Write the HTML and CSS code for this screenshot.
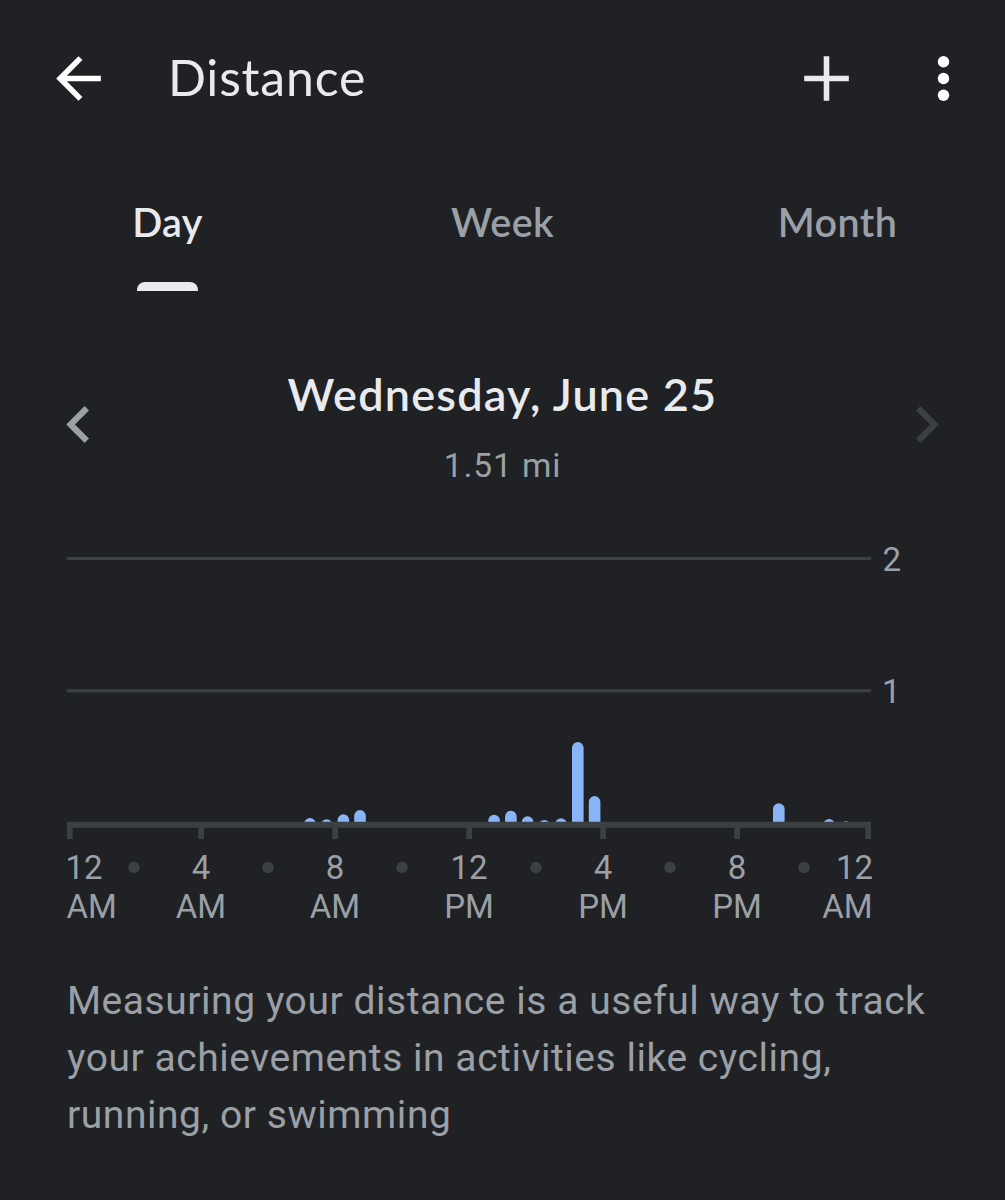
FILE: index.html
```html
<!DOCTYPE html>
<html lang="en">
<head>
  <meta charset="UTF-8">
  <meta name="viewport" content="width=device-width, initial-scale=1.0">
  <title>Distance</title>
  <link rel="stylesheet" href="styles.css">
</head>
<body>

  <header class="app-bar">
    <svg class="icon" viewBox="0 0 24 24" fill="#fff"><path d="M20 11H7.83l5.59-5.59L12 4l-8 8 8 8 1.41-1.41L7.83 13H20v-2z"/></svg>
    <h1>Distance</h1>
    <svg class="icon add" viewBox="0 0 24 24" fill="#e8eaed"><path d="M20 13h-7v7h-2v-7H4v-2h7V4h2v7h7v2z"/></svg>
    <svg class="icon" viewBox="0 0 24 24" fill="#fff"><circle cx="12" cy="6" r="2.05"/><circle cx="12" cy="12" r="2.05"/><circle cx="12" cy="18" r="2.05"/></svg>
  </header>

  <nav class="tabs">
    <a class="tab active"><span>Day</span></a>
    <a class="tab"><span>Week</span></a>
    <a class="tab"><span>Month</span></a>
  </nav>

  <main>
    <div class="date-nav">
      <svg class="icon" viewBox="0 0 24 24" fill="#9aa0a6"><path d="M15.41 7.41L14 6l-6 6 6 6 1.41-1.41L10.83 12z" transform="matrix(1.1 0 0 1.1 -1.2 -1.2)"/></svg>
      <div class="date">
        <h2>Wednesday, June 25</h2>
        <p>1.51 mi</p>
      </div>
      <svg class="icon" viewBox="0 0 24 24" fill="#3c4043"><path d="M10 6L8.59 7.41 13.17 12l-4.58 4.59L10 18l6-6z" transform="matrix(1.1 0 0 1.1 -1.2 -1.2)"/></svg>
    </div>

    <svg class="chart" viewBox="0 530 1005 400">
      <defs>
        <clipPath id="plot"><rect x="67" y="540" width="804" height="282"/></clipPath>
      </defs>
      <g class="grid">
        <rect x="67" y="557" width="804" height="3"/>
        <rect x="67" y="689.3" width="804" height="3"/>
      </g>
      <g class="bars" clip-path="url(#plot)">
        <rect x="304.2" y="818" width="11.6" height="20" rx="5.8"/>
        <rect x="320.8" y="819.3" width="11.6" height="20" rx="5.8"/>
        <rect x="337.6" y="814.3" width="11.6" height="20" rx="5.8"/>
        <rect x="354.2" y="810" width="11.6" height="20" rx="5.8"/>
        <rect x="488.3" y="814.7" width="11.6" height="20" rx="5.8"/>
        <rect x="505.1" y="810.8" width="11.6" height="20" rx="5.8"/>
        <rect x="521.8" y="816.3" width="11.6" height="20" rx="5.8"/>
        <rect x="538.5" y="819.9" width="11.6" height="20" rx="5.8"/>
        <rect x="555.2" y="818.2" width="11.6" height="20" rx="5.8"/>
        <rect x="572" y="742" width="11.6" height="100" rx="5.8"/>
        <rect x="588.8" y="796" width="11.6" height="50" rx="5.8"/>
        <rect x="773" y="803.2" width="11.6" height="40" rx="5.8"/>
        <rect x="823.3" y="819.1" width="11.6" height="20" rx="5.8"/>
        <rect x="840.1" y="821.2" width="11.6" height="20" rx="5.8"/>
      </g>
      <path class="axis" d="M67 821.7h804V839h-5.7v-11.3H740V839h-5.7v-11.3H606V839h-5.7v-11.3H472V839h-5.7v-11.3H338V839h-5.7v-11.3H204V839h-5.7v-11.3H72.7V839H67z"/>
      <g class="dots">
        <circle cx="134" cy="867.5" r="5.8"/>
        <circle cx="268" cy="867.5" r="5.8"/>
        <circle cx="402" cy="867.5" r="5.8"/>
        <circle cx="536" cy="867.5" r="5.8"/>
        <circle cx="670" cy="867.5" r="5.8"/>
        <circle cx="804" cy="867.5" r="5.8"/>
      </g>
      <g class="labels">
        <text x="882.5" y="571">2</text>
        <text x="882" y="703">1</text>
        <text x="65.5" y="879">12</text><text x="66.5" y="918">AM</text>
        <g text-anchor="middle">
          <text x="201" y="879">4</text><text x="201" y="918">AM</text>
          <text x="335" y="879">8</text><text x="335" y="918">AM</text>
          <text x="469" y="879">12</text><text x="469" y="918">PM</text>
          <text x="603" y="879">4</text><text x="603" y="918">PM</text>
          <text x="737" y="879">8</text><text x="737" y="918">PM</text>
        </g>
        <text x="873" y="879" text-anchor="end">12</text><text x="872.5" y="918" text-anchor="end">AM</text>
      </g>
    </svg>

    <p class="info">Measuring your distance is a useful way to track your achievements in activities like cycling, running, or swimming</p>
  </main>

</body>
</html>
```

FILE: styles.css
```css
body {
  margin: 0;
  min-height: 1200px;
  background-color: #202124;
  color: #e8eaed;
  font-family: Roboto, sans-serif;
}

h1, h2, p {
  margin: 0;
}

.icon {
  width: 67px;
  height: 67px;
  flex: none;
}

.app-bar {
  display: flex;
  align-items: center;
  height: 156px;
  padding: 0 28px 0 45px;
}

.app-bar h1 {
  flex: 1;
  margin-left: 56px;
  padding-bottom: 3px;
  font-family: Lato, sans-serif;
  font-size: 50px;
  font-weight: 400;
  letter-spacing: 0.8px;
}

.app-bar .add {
  margin-right: 50px;
}

.tabs {
  display: flex;
  height: 135px;
}

.tab {
  flex: 1;
  display: flex;
  flex-direction: column;
  align-items: center;
  color: #9aa0a6;
  font-family: Lato, sans-serif;
  font-size: 39.5px;
  font-weight: 600;
  line-height: 132px;
  letter-spacing: 0.4px;
}

.tab.active {
  color: #e8eaed;
}

.tab.active::after {
  content: "";
  width: 61px;
  height: 9px;
  border-radius: 8px 8px 0 0;
  background-color: #e8eaed;
}

.tab span {
  height: 126px;
}

.date-nav {
  display: flex;
  justify-content: space-between;
  padding: 70px 45px 0;
}

.date-nav .icon {
  margin-top: 30px;
}

.date {
  text-align: center;
}

.date h2 {
  font-family: Lato, sans-serif;
  font-size: 45px;
  font-weight: 600;
  line-height: 66px;
  letter-spacing: 1.2px;
}

.date p {
  color: #9aa0a6;
  font-size: 33.5px;
  line-height: 78px;
  letter-spacing: 0.9px;
}

.chart {
  display: block;
  width: 1005px;
  height: 400px;
  margin-top: 25px;
}

.grid, .axis, .dots {
  fill: #3c4043;
}

.bars {
  fill: #8ab4f8;
}

.labels {
  fill: #9aa0a6;
  font-size: 33px;
}

.info {
  padding: 43px 67px 0;
  color: #9aa0a6;
  font-size: 39px;
  line-height: 57px;
  letter-spacing: 0.55px;
}
```
